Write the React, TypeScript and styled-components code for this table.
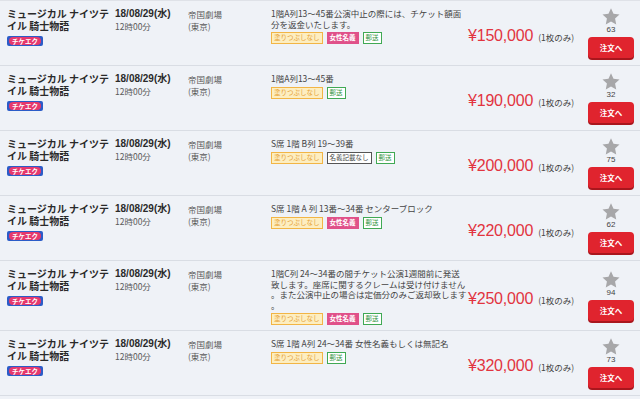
import React from 'react';
import styled, { createGlobalStyle } from 'styled-components';

type TagKind = 'nuri' | 'josei' | 'meigi' | 'yuso';

type Listing = {
  note: string;
  tags: TagKind[];
  price: string;
  likes: number;
};

const TAG_LABEL: Record<TagKind, string> = {
  nuri: '塗りつぶしなし',
  josei: '女性名義',
  meigi: '名義記載なし',
  yuso: '郵送',
};

const listings: Listing[] = [
  {
    note: '1階A列13～45番公演中止の際には、チケット額面分を返金いたします。',
    tags: ['nuri', 'josei', 'yuso'],
    price: '¥150,000',
    likes: 63,
  },
  { note: '1階A列13～45番', tags: ['nuri', 'yuso'], price: '¥190,000', likes: 32 },
  {
    note: 'S席 1階 B列 19～39番',
    tags: ['nuri', 'meigi', 'yuso'],
    price: '¥200,000',
    likes: 75,
  },
  {
    note: 'S席 1階 A 列 13番～34番 センターブロック',
    tags: ['nuri', 'josei', 'yuso'],
    price: '¥220,000',
    likes: 62,
  },
  {
    note: '1階C列 24～34番の間チケット公演1週間前に発送致します。座席に関するクレームは受け付けません。また公演中止の場合は定価分のみご返却致します。',
    tags: ['nuri', 'josei', 'yuso'],
    price: '¥250,000',
    likes: 94,
  },
  {
    note: 'S席 1階 A列 24～34番 女性名義もしくは無記名',
    tags: ['nuri', 'yuso'],
    price: '¥320,000',
    likes: 73,
  },
];

export default function App() {
  return (
    <>
      <GlobalStyle />
      <List>
        {listings.map((item, i) => (
          <Row key={i}>
            <TitleCell>
              <Title>ミュージカル ナイツテイル 騎士物語</Title>
              <Badge>
                <BadgeText>チケエク</BadgeText>
              </Badge>
            </TitleCell>
            <div>
              <DateText>18/08/29(水)</DateText>
              <SubText>12時00分</SubText>
            </div>
            <div>
              <SubText>帝国劇場</SubText>
              <SubText>(東京)</SubText>
            </div>
            <NoteCell>
              <Note>{item.note}</Note>
              <Tags>
                {item.tags.map((t) => (
                  <Tag key={t} $kind={t}>
                    {TAG_LABEL[t]}
                  </Tag>
                ))}
              </Tags>
            </NoteCell>
            <PriceCell>
              <Price>{item.price}</Price>
              <Qty>(1枚のみ)</Qty>
            </PriceCell>
            <ActionCell>
              <svg width="18" height="17" viewBox="0 0 24 23">
                <polygon
                  points="12,0.5 15.4,7.9 23.5,8.8 17.5,14.3 19.1,22.3 12,18.3 4.9,22.3 6.5,14.3 0.5,8.8 8.6,7.9"
                  fill="#a7a7a9"
                />
              </svg>
              <Count>{item.likes}</Count>
              <OrderBtn>注文へ</OrderBtn>
            </ActionCell>
          </Row>
        ))}
      </List>
    </>
  );
}

const GlobalStyle = createGlobalStyle`
  body {
    margin: 0;
    background: #eff2f7;
    font-family: "Liberation Sans", "Noto Sans CJK JP", sans-serif;
  }
`;

const List = styled.div`
  border-top: 1px solid #dfe2e8;
`;

const Row = styled.div`
  display: grid;
  grid-template-columns: 108px 73px 83px 197px 1fr 46px;
  box-sizing: border-box;
  min-height: 65px;
  padding: 7px 6px 5px 7px;
  border-bottom: 1px solid #d9dde4;
`;

const TitleCell = styled.div`
  display: flex;
  flex-direction: column;
  align-items: flex-start;
  gap: 4px;
`;

const Title = styled.div`
  font-family: "Noto Sans CJK JP", sans-serif;
  font-size: 10px;
  font-weight: 700;
  line-height: 12px;
  color: #2a2a2a;
`;

const Badge = styled.span`
  display: inline-flex;
  padding: 1px 2px;
  border-radius: 2px;
  background: #2b5cc8;
`;

const BadgeText = styled.span`
  padding: 0 3px;
  border-radius: 4px;
  background: #e6396d;
  color: #fff;
  font-family: "Noto Sans CJK JP", sans-serif;
  font-size: 6.5px;
  font-weight: 700;
  line-height: 8px;
`;

const DateText = styled.div`
  font-size: 10px;
  font-weight: 700;
  line-height: 12px;
  color: #2a2a2a;
`;

const SubText = styled.div`
  font-family: "Noto Sans CJK JP", sans-serif;
  font-size: 8.5px;
  line-height: 12px;
  color: #5a5a5a;
`;

const NoteCell = styled.div`
  display: flex;
  flex-direction: column;
  gap: 3px;
`;

const Note = styled.div`
  font-family: "Noto Sans CJK JP", sans-serif;
  font-size: 8.5px;
  line-height: 10.5px;
  color: #444;
  line-break: anywhere;
`;

const TAG_STYLE: Record<TagKind, string> = {
  nuri: 'background:#fdeec0;border-color:#f2b545;color:#e6a035;',
  josei: 'background:#e05189;border-color:#e05189;color:#fff;',
  meigi: 'background:#fff;border-color:#555;color:#444;',
  yuso: 'background:#fff;border-color:#40a954;color:#3b9a4b;',
};

const Tags = styled.div`
  display: flex;
  gap: 4px;
`;

const Tag = styled.span<{ $kind: TagKind }>`
  box-sizing: border-box;
  height: 12px;
  padding: 0 2px;
  border: 1.5px solid;
  font-family: "Noto Sans CJK JP", sans-serif;
  font-size: 6.5px;
  font-weight: ${({ $kind }) => ($kind === 'josei' ? 700 : 400)};
  line-height: 9px;
  ${({ $kind }) => TAG_STYLE[$kind]}
`;

const PriceCell = styled.div`
  align-self: center;
  display: flex;
  align-items: baseline;
  padding-top: 4px;
`;

const Price = styled.span`
  font-size: 16px;
  color: #e2343f;
  letter-spacing: -0.2px;
`;

const Qty = styled.span`
  margin-left: 5px;
  font-family: "Noto Sans CJK JP", sans-serif;
  font-size: 8.5px;
  color: #444;
`;

const ActionCell = styled.div`
  align-self: center;
  display: flex;
  flex-direction: column;
  align-items: center;
  margin-top: -2px;
`;

const Count = styled.div`
  font-size: 8px;
  line-height: 10px;
  color: #444;
`;

const OrderBtn = styled.button`
  width: 46px;
  height: 21px;
  margin-top: 2px;
  padding: 0;
  border: none;
  border-radius: 4px;
  background: #e0242e;
  box-shadow: 0 2px 0 #a9161d;
  color: #fff;
  font-family: "Noto Sans CJK JP", sans-serif;
  font-size: 7.5px;
  font-weight: 700;
`;
